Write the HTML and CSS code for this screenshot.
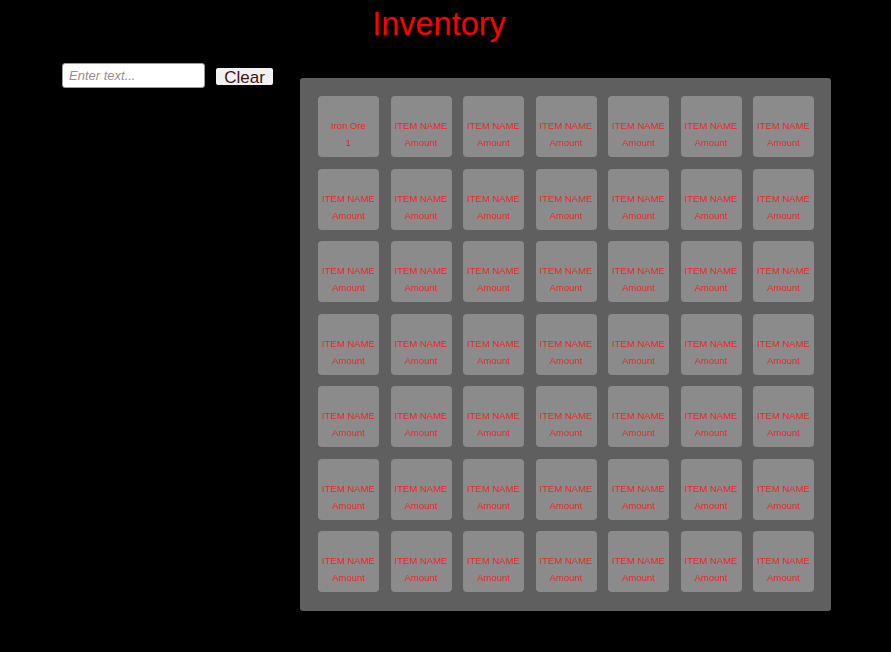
FILE: index.html
```html
<!DOCTYPE html>
<html lang="en">
<head>
    <meta charset="UTF-8">
    <title>Inventory</title>
    <link rel="stylesheet" href="styles.css">
</head>
<body>
    <h1 class="title">Inventory</h1>
    <div class="main">
        <div class="controls">
            <input class="search" type="text" placeholder="Enter text...">
            <button class="clear">Clear</button>
        </div>
        <div class="panel">
            <div class="slot"><span>Iron Ore</span><span>1</span></div>
            <div class="slot"><span>ITEM NAME</span><span>Amount</span></div>
            <div class="slot"><span>ITEM NAME</span><span>Amount</span></div>
            <div class="slot"><span>ITEM NAME</span><span>Amount</span></div>
            <div class="slot"><span>ITEM NAME</span><span>Amount</span></div>
            <div class="slot"><span>ITEM NAME</span><span>Amount</span></div>
            <div class="slot"><span>ITEM NAME</span><span>Amount</span></div>

            <div class="slot"><span>ITEM NAME</span><span>Amount</span></div>
            <div class="slot"><span>ITEM NAME</span><span>Amount</span></div>
            <div class="slot"><span>ITEM NAME</span><span>Amount</span></div>
            <div class="slot"><span>ITEM NAME</span><span>Amount</span></div>
            <div class="slot"><span>ITEM NAME</span><span>Amount</span></div>
            <div class="slot"><span>ITEM NAME</span><span>Amount</span></div>
            <div class="slot"><span>ITEM NAME</span><span>Amount</span></div>

            <div class="slot"><span>ITEM NAME</span><span>Amount</span></div>
            <div class="slot"><span>ITEM NAME</span><span>Amount</span></div>
            <div class="slot"><span>ITEM NAME</span><span>Amount</span></div>
            <div class="slot"><span>ITEM NAME</span><span>Amount</span></div>
            <div class="slot"><span>ITEM NAME</span><span>Amount</span></div>
            <div class="slot"><span>ITEM NAME</span><span>Amount</span></div>
            <div class="slot"><span>ITEM NAME</span><span>Amount</span></div>

            <div class="slot"><span>ITEM NAME</span><span>Amount</span></div>
            <div class="slot"><span>ITEM NAME</span><span>Amount</span></div>
            <div class="slot"><span>ITEM NAME</span><span>Amount</span></div>
            <div class="slot"><span>ITEM NAME</span><span>Amount</span></div>
            <div class="slot"><span>ITEM NAME</span><span>Amount</span></div>
            <div class="slot"><span>ITEM NAME</span><span>Amount</span></div>
            <div class="slot"><span>ITEM NAME</span><span>Amount</span></div>

            <div class="slot"><span>ITEM NAME</span><span>Amount</span></div>
            <div class="slot"><span>ITEM NAME</span><span>Amount</span></div>
            <div class="slot"><span>ITEM NAME</span><span>Amount</span></div>
            <div class="slot"><span>ITEM NAME</span><span>Amount</span></div>
            <div class="slot"><span>ITEM NAME</span><span>Amount</span></div>
            <div class="slot"><span>ITEM NAME</span><span>Amount</span></div>
            <div class="slot"><span>ITEM NAME</span><span>Amount</span></div>

            <div class="slot"><span>ITEM NAME</span><span>Amount</span></div>
            <div class="slot"><span>ITEM NAME</span><span>Amount</span></div>
            <div class="slot"><span>ITEM NAME</span><span>Amount</span></div>
            <div class="slot"><span>ITEM NAME</span><span>Amount</span></div>
            <div class="slot"><span>ITEM NAME</span><span>Amount</span></div>
            <div class="slot"><span>ITEM NAME</span><span>Amount</span></div>
            <div class="slot"><span>ITEM NAME</span><span>Amount</span></div>

            <div class="slot"><span>ITEM NAME</span><span>Amount</span></div>
            <div class="slot"><span>ITEM NAME</span><span>Amount</span></div>
            <div class="slot"><span>ITEM NAME</span><span>Amount</span></div>
            <div class="slot"><span>ITEM NAME</span><span>Amount</span></div>
            <div class="slot"><span>ITEM NAME</span><span>Amount</span></div>
            <div class="slot"><span>ITEM NAME</span><span>Amount</span></div>
            <div class="slot"><span>ITEM NAME</span><span>Amount</span></div>
        </div>
    </div>
</body>
</html>
```

FILE: styles.css
```css
body {
    margin: 0;
    background: black;
    font-family: "Liberation Sans", Arial, sans-serif;
}

.title {
    margin: 0;
    padding-right: 13px;
    font-size: 32.5px;
    font-weight: normal;
    line-height: 48px;
    text-align: center;
    color: #ff0000;
}

.main {
    display: flex;
    align-items: flex-start;
    margin-top: 15px;
    padding-left: 62px;
}

.controls {
    display: flex;
    align-items: center;
    gap: 11px;
}

.search {
    box-sizing: border-box;
    width: 143px;
    height: 25px;
    padding: 0 6px;
    border: 1px solid #9a9a9a;
    border-radius: 3px;
    background: white;
    font-family: inherit;
    font-size: 13px;
    outline: none;
}

.search::placeholder {
    color: #a08b8b;
    font-style: italic;
}

.clear {
    box-sizing: border-box;
    height: 17px;
    width: 57px;
    margin-top: 1px;
    padding: 0;
    border: none;
    border-radius: 2px;
    background: #f2f0f0;
    color: #3d1515;
    font-family: inherit;
    font-size: 17px;
    line-height: 19px;
}

.panel {
    display: grid;
    grid-template-columns: repeat(7, 61px);
    grid-auto-rows: 61px;
    gap: 11.5px;
    box-sizing: border-box;
    width: 531px;
    height: 533px;
    margin-top: 15px;
    margin-left: 27px;
    padding: 18px 17px 19px 18px;
    background: #5f5f5f;
    border-radius: 3px;
}

.slot {
    display: flex;
    flex-direction: column;
    align-items: center;
    padding-top: 21px;
    box-sizing: border-box;
    background: #8b8b8b;
    border-radius: 4px;
    color: #e52a2a;
    font-size: 9.5px;
    line-height: 17px;
    white-space: nowrap;
}
```
